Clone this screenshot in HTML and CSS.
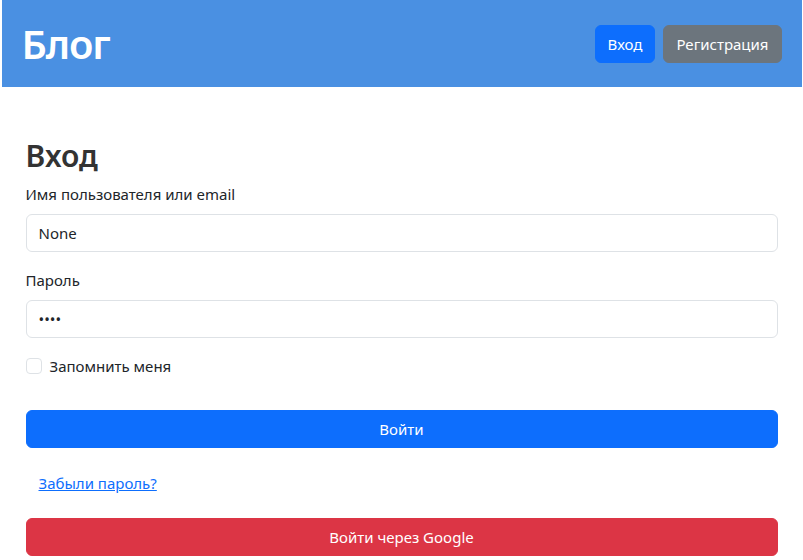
FILE: index.html
```html
<!DOCTYPE html>
<html lang="ru">
<head>
<meta charset="utf-8">
<title>Блог — Вход</title>
<link rel="stylesheet" href="styles.css">
</head>
<body>
<div class="page">
  <header class="topbar">
    <h1 class="brand">Блог</h1>
    <nav class="nav">
      <a class="btn btn-primary" href="#">Вход</a>
      <a class="btn btn-secondary" href="#">Регистрация</a>
    </nav>
  </header>
  <main class="content">
    <h2 class="title">Вход</h2>
    <form class="form">
      <div class="group">
        <label class="label" for="user">Имя пользователя или email</label>
        <input class="input" id="user" type="text" value="None">
      </div>
      <div class="group">
        <label class="label" for="pass">Пароль</label>
        <input class="input" id="pass" type="password" value="1234">
      </div>
      <div class="check">
        <input class="checkbox" id="remember" type="checkbox">
        <label class="check-label" for="remember">Запомнить меня</label>
      </div>
      <button class="btn btn-primary btn-block" type="button">Войти</button>
      <div class="link-row"><a class="btn btn-link" href="#">Забыли пароль?</a></div>
      <a class="btn btn-danger btn-block" href="#">Войти через Google</a>
    </form>
  </main>
</div>
</body>
</html>
```
FILE: styles.css
```css
* { box-sizing: border-box; }
html, body { margin: 0; padding: 0; }
body {
  font-family: "Noto Sans", "Open Sans", sans-serif;
  font-size: 15px;
  line-height: 24px;
  color: #212529;
  background: #fff;
}
.page {
  max-width: 800px;
  margin: 0 auto;
}
.topbar {
  background: #4a90e2;
  padding: 20px;
  display: flex;
  align-items: center;
  justify-content: space-between;
  height: 87px;
}
.brand {
  margin: 0;
  color: #fff;
  font-size: 40px;
  font-weight: 600;
  line-height: 1.2;
  letter-spacing: -1.2px;
}
.nav {
  display: flex;
  gap: 8px;
}
.btn {
  display: inline-block;
  padding: 6px 12px;
  font-family: inherit;
  font-size: 15px;
  line-height: 24px;
  border: 1px solid transparent;
  border-radius: 6px;
  text-decoration: none;
  text-align: center;
  cursor: pointer;
}
.btn-primary { background: #0d6efd; border-color: #0d6efd; color: #fff; }
.btn-secondary { background: #6c757d; border-color: #6c757d; color: #fff; }
.btn-danger { background: #dc3545; border-color: #dc3545; color: #fff; }
.btn-link { color: #0d6efd; text-decoration: underline; background: none; }
.btn-block { display: block; width: 100%; }
.content {
  padding: 51px 24px 0;
}
.title {
  margin: 0 0 8px;
  font-size: 30px;
  font-weight: 600;
  line-height: 36px;
  color: #333;
}
.form { display: flex; flex-direction: column; }
.group { margin-bottom: 16px; display: flex; flex-direction: column; }
.label { margin-bottom: 8px; }
.input {
  height: 38px;
  padding: 6px 12px;
  font-family: inherit;
  font-size: 15px;
  line-height: 24px;
  color: #212529;
  border: 1px solid #dee2e6;
  border-radius: 6px;
  background: #fff;
}
.check {
  display: flex;
  align-items: center;
  gap: 8px;
  height: 24px;
  margin-bottom: 32px;
}
.checkbox {
  appearance: none;
  -webkit-appearance: none;
  margin: 0;
  width: 16px;
  height: 16px;
  border: 1px solid #dee2e6;
  border-radius: 4px;
  background: #fff;
}
.link-row { margin: 16px 0; }
```
